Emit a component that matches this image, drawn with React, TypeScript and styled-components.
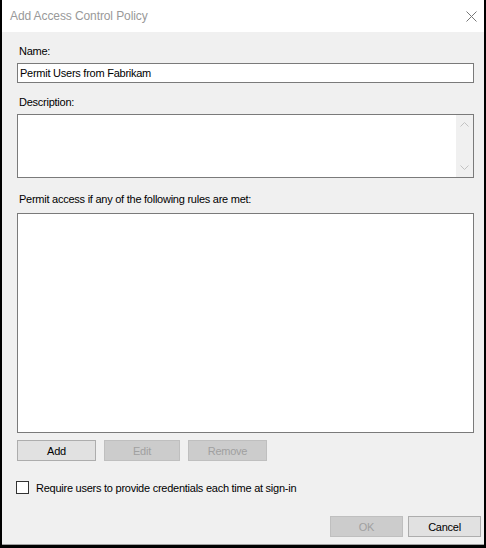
import React from "react";
import styled, { createGlobalStyle } from "styled-components";

const Global = createGlobalStyle`
  html, body { margin: 0; padding: 0; background: #ffffff; }
  * { box-sizing: border-box; }
`;

const Window = styled.div`
  width: 486px;
  height: 548px;
  display: flex;
  flex-direction: column;
  background: #f0f0f0;
  border-left: 2px solid #000;
  border-right: 2px solid #000;
  border-bottom: 3px solid #000;
  font-family: "Liberation Sans", Arial, sans-serif;
  font-size: 11px;
  letter-spacing: -0.25px;
  color: #000;
`;

const TitleBar = styled.div`
  height: 32px;
  flex: none;
  background: #ffffff;
  display: flex;
  align-items: center;
  justify-content: space-between;
  padding: 0 7px 0 8px;
`;

const Title = styled.span`
  font-size: 12px;
  letter-spacing: -0.1px;
  color: #999999;
`;

const Body = styled.div`
  flex: 1;
  display: flex;
  flex-direction: column;
  padding: 0 10px 0 15px;
  border-bottom: 1px solid #a0a0a0;
`;

const Label = styled.div<{ $top: number; $gap: number }>`
  line-height: 13px;
  height: 13px;
  padding-left: 2px;
  margin-top: ${(p) => p.$top}px;
  margin-bottom: ${(p) => p.$gap}px;
  white-space: nowrap;
`;

const Field = styled.div<{ $h: number }>`
  height: ${(p) => p.$h}px;
  background: #ffffff;
  border: 1px solid #7a7a7a;
  display: flex;
  align-items: center;
  padding-left: 2px;
  flex: none;
`;

const Area = styled.div<{ $h: number; $border: string }>`
  height: ${(p) => p.$h}px;
  background: #ffffff;
  border: 1px solid ${(p) => p.$border};
  display: flex;
  justify-content: flex-end;
  flex: none;
`;

const ScrollBar = styled.div`
  width: 17px;
  background: #f0f0f0;
  display: flex;
  flex-direction: column;
  justify-content: space-between;
  align-items: center;
  padding: 7px 0 7px;
`;

const ButtonRow = styled.div<{ $top: number }>`
  display: flex;
  gap: 8px;
  margin-top: ${(p) => p.$top}px;
`;

const Button = styled.div<{ $w: number; $disabled?: boolean }>`
  width: ${(p) => p.$w}px;
  height: 21px;
  display: flex;
  align-items: center;
  justify-content: center;
  background: ${(p) => (p.$disabled ? "#cccccc" : "#e1e1e1")};
  border: 1px solid ${(p) => (p.$disabled ? "#bfbfbf" : "#adadad")};
  color: ${(p) => (p.$disabled ? "#a0a0a0" : "#000000")};
`;

const CheckRow = styled.div`
  display: flex;
  align-items: center;
  gap: 7px;
  margin-top: 20px;
  margin-left: -1px;
  height: 13px;
`;

const Box = styled.div`
  width: 13px;
  height: 13px;
  background: #ffffff;
  border: 1px solid #333333;
`;

const Footer = styled.div`
  display: flex;
  justify-content: flex-end;
  gap: 5px;
  margin-top: 22px;
  margin-right: -7px;
`;

const Chevron = ({ up }: { up?: boolean }) => (
  <svg width="9" height="5" viewBox="0 0 9 5">
    <polyline
      points={up ? "0.5,4.5 4.5,0.5 8.5,4.5" : "0.5,0.5 4.5,4.5 8.5,0.5"}
      fill="none"
      stroke="#c2c2c2"
      strokeWidth="1"
    />
  </svg>
);

const CloseIcon = () => (
  <svg width="11" height="11" viewBox="0 0 11 11">
    <path d="M0.5 0.5 L10.5 10.5 M10.5 0.5 L0.5 10.5" stroke="#777777" strokeWidth="1" />
  </svg>
);

export default function App() {
  return (
    <>
      <Global />
      <Window>
        <TitleBar>
          <Title>Add Access Control Policy</Title>
          <CloseIcon />
        </TitleBar>
        <Body>
          <Label $top={13} $gap={5}>Name:</Label>
          <Field $h={20}>Permit Users from Fabrikam</Field>
          <Label $top={13} $gap={5}>Description:</Label>
          <Area $h={64} $border="#7a7a7a">
            <ScrollBar>
              <Chevron up />
              <Chevron />
            </ScrollBar>
          </Area>
          <Label $top={15} $gap={7}>Permit access if any of the following rules are met:</Label>
          <Area $h={220} $border="#7a7a7a" />
          <ButtonRow $top={7}>
            <Button $w={79}>Add</Button>
            <Button $w={76} $disabled>Edit</Button>
            <Button $w={79} $disabled>Remove</Button>
          </ButtonRow>
          <CheckRow>
            <Box />
            <span>Require users to provide credentials each time at sign-in</span>
          </CheckRow>
          <Footer>
            <Button $w={73} $disabled>OK</Button>
            <Button $w={73}>Cancel</Button>
          </Footer>
        </Body>
      </Window>
    </>
  );
}
